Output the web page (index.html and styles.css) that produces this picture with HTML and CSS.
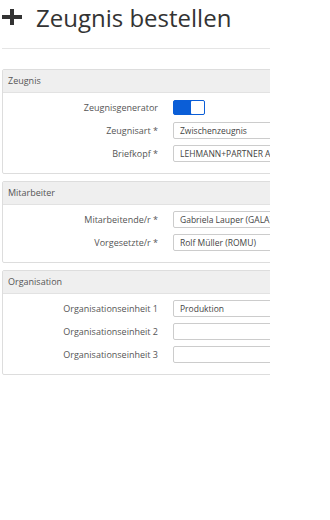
FILE: index.html
```html
<!DOCTYPE html>
<html lang="de">
<head>
  <meta charset="UTF-8">
  <title>Zeugnis bestellen</title>
  <link rel="stylesheet" href="styles.css">
</head>
<body>
  <div class="page">
    <h1 class="page-title">
      <svg class="title-icon" width="20" height="16" viewBox="0 0 20 16">
        <path d="M8 0h4v6h8v4h-8v6H8v-6H0V6h8z" fill="#333"/>
      </svg>
      <span>Zeugnis bestellen</span>
    </h1>
    <div class="title-rule"></div>

    <div class="panel">
      <div class="panel-header">Zeugnis</div>
      <div class="panel-body">
        <div class="form-row">
          <label class="form-label">Zeugnisgenerator</label>
          <div class="switch"><span class="switch-knob"></span></div>
        </div>
        <div class="form-row">
          <label class="form-label">Zeugnisart *</label>
          <div class="form-input">Zwischenzeugnis</div>
        </div>
        <div class="form-row">
          <label class="form-label">Briefkopf *</label>
          <div class="form-input">LEHMANN+PARTNER AG</div>
        </div>
      </div>
    </div>

    <div class="panel">
      <div class="panel-header">Mitarbeiter</div>
      <div class="panel-body">
        <div class="form-row">
          <label class="form-label">Mitarbeitende/r *</label>
          <div class="form-input">Gabriela Lauper (GALA)</div>
        </div>
        <div class="form-row">
          <label class="form-label">Vorgesetzte/r *</label>
          <div class="form-input">Rolf Müller (ROMU)</div>
        </div>
      </div>
    </div>

    <div class="panel">
      <div class="panel-header">Organisation</div>
      <div class="panel-body">
        <div class="form-row">
          <label class="form-label">Organisationseinheit 1</label>
          <div class="form-input">Produktion</div>
        </div>
        <div class="form-row">
          <label class="form-label">Organisationseinheit 2</label>
          <div class="form-input"></div>
        </div>
        <div class="form-row">
          <label class="form-label">Organisationseinheit 3</label>
          <div class="form-input"></div>
        </div>
      </div>
    </div>
  </div>
</body>
</html>
```

FILE: styles.css
```css
body {
  margin: 0;
  padding: 0;
  background: #fff;
  font-family: "Open Sans", "Noto Sans", sans-serif;
  color: #444;
}

.page {
  width: 268px;
  margin-left: 2px;
  overflow: hidden;
}

.page-title {
  display: flex;
  align-items: center;
  gap: 14px;
  height: 30px;
  margin: 2px 0 0;
  font-size: 24px;
  font-weight: normal;
  color: #333;
  white-space: nowrap;
}

.title-icon {
  flex: none;
}

.title-rule {
  height: 1px;
  background: #e5e5e5;
  margin: 16px 0 20px;
}

.panel {
  width: 360px;
  border: 1px solid #ddd;
  border-radius: 2px;
  margin-bottom: 7px;
}

.panel-header {
  height: 22px;
  line-height: 22px;
  padding-left: 5px;
  background: #efefef;
  border-bottom: 1px solid #e2e2e2;
  font-size: 9px;
  color: #555;
}

.panel-body {
  padding: 6px 0 11px;
}

.form-row {
  display: flex;
  align-items: center;
  height: 17px;
  margin-bottom: 6px;
}

.form-row:last-child {
  margin-bottom: 0;
}

.form-label {
  width: 155px;
  flex: none;
  text-align: right;
  font-size: 9px;
  color: #555;
  padding-right: 15px;
  white-space: nowrap;
}

.form-input {
  width: 180px;
  height: 15px;
  line-height: 15px;
  border: 1px solid #ccc;
  border-radius: 2px;
  padding: 0 6px;
  font-size: 8.5px;
  color: #444;
  white-space: nowrap;
}

.switch {
  width: 32px;
  height: 15px;
  box-sizing: border-box;
  background: #0b5ed7;
  border: 1px solid #0b5ed7;
  border-radius: 2px;
  display: flex;
  justify-content: flex-end;
}

.switch-knob {
  width: 13px;
  height: 13px;
  background: #fff;
  border-radius: 1px;
}
```
